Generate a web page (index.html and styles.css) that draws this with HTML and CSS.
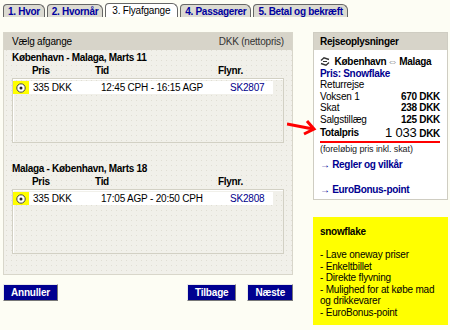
FILE: index.html
```html
<!DOCTYPE html>
<html lang="da">
<head>
    <meta charset="UTF-8">
    <title>Flyafgange</title>
    <link rel="stylesheet" href="styles.css">
</head>
<body>
    <div class="page">
        <div class="tabs">
            <span class="tab">1. Hvor</span>
            <span class="tab">2. Hvornår</span>
            <span class="tab active">3. Flyafgange</span>
            <span class="tab">4. Passagerer</span>
            <span class="tab">5. Betal og bekræft</span>
        </div>

        <div class="main">
            <div class="left">
                <div class="panel">
                    <div class="panel-head">
                        <span>Vælg afgange</span>
                        <span class="light">DKK (nettopris)</span>
                    </div>
                    <div class="panel-body">
                        <div class="leg">
                            <div class="leg-title">København - Malaga, Marts 11</div>
                            <div class="cols">
                                <span class="c-price">Pris</span>
                                <span class="c-time">Tid</span>
                                <span class="c-flight">Flynr.</span>
                            </div>
                            <div class="flights">
                                <div class="flight">
                                    <span class="radio"><svg width="10" height="10" viewBox="0 0 10 10"><circle cx="5" cy="5" r="4.2" fill="#fff" stroke="#444" stroke-width="1"/><circle cx="5" cy="5" r="1.5" fill="#222"/></svg></span>
                                    <span class="c-price">335 DKK</span>
                                    <span class="c-time">12:45 CPH - 16:15 AGP</span>
                                    <span class="c-flight link">SK2807</span>
                                </div>
                            </div>
                        </div>
                        <div class="leg">
                            <div class="leg-title">Malaga - København, Marts 18</div>
                            <div class="cols">
                                <span class="c-price">Pris</span>
                                <span class="c-time">Tid</span>
                                <span class="c-flight">Flynr.</span>
                            </div>
                            <div class="flights">
                                <div class="flight">
                                    <span class="radio"><svg width="10" height="10" viewBox="0 0 10 10"><circle cx="5" cy="5" r="4.2" fill="#fff" stroke="#444" stroke-width="1"/><circle cx="5" cy="5" r="1.5" fill="#222"/></svg></span>
                                    <span class="c-price">335 DKK</span>
                                    <span class="c-time">17:05 AGP - 20:50 CPH</span>
                                    <span class="c-flight link">SK2808</span>
                                </div>
                            </div>
                        </div>
                    </div>
                </div>
                <div class="buttons">
                    <button class="btn">Annuller</button>
                    <span class="spacer"></span>
                    <button class="btn">Tilbage</button>
                    <button class="btn">Næste</button>
                </div>
            </div>

            <div class="right">
                <div class="info">
                    <div class="panel-head">Rejseoplysninger</div>
                    <div class="info-body">
                        <div class="route">
                            <svg width="10" height="9" viewBox="0 0 10 9"><path d="M1 3.5 L4 0.8 L9 2.5 M9 5.5 L6 8.2 L1 6.5" fill="none" stroke="#333" stroke-width="1.4"/><path d="M3 4.5 H7" stroke="#333" stroke-width="1"/></svg>
                            <b>København</b><span class="swap">⇔</span><b>Malaga</b>
                        </div>
                        <div class="blue-b">Pris: Snowflake</div>
                        <div>Returrejse</div>
                        <div class="line"><span>Voksen 1</span><b>670 DKK</b></div>
                        <div class="line"><span>Skat</span><b>238 DKK</b></div>
                        <div class="line"><span>Salgstillæg</span><b>125 DKK</b></div>
                        <div class="line total"><b>Totalpris</b><span><span class="big">1 033</span> <b>DKK</b></span></div>
                        <div class="note">(foreløbig pris inkl. skat)</div>
                        <div class="blue-b more">→ Regler og vilkår</div>
                        <div class="blue-b bonus">→ EuroBonus-point</div>
                    </div>
                </div>
                <div class="promo">
                    <b>snowflake</b><br><br>
                    - Lave oneway priser<br>
                    - Enkeltbillet<br>
                    - Direkte flyvning<br>
                    - Mulighed for at købe mad og drikkevarer<br>
                    - EuroBonus-point
                </div>
            </div>
        </div>

        <svg class="arrow" width="30" height="18" viewBox="0 0 30 18"><path d="M0 5 L26 10 M20 2 L27 10 L17 15" fill="none" stroke="#f00" stroke-width="3"/></svg>
    </div>
</body>
</html>
```

FILE: styles.css
```css
* {
    margin: 0;
    padding: 0;
    box-sizing: border-box;
}

body {
    font-family: 'Liberation Sans', Arial, sans-serif;
    font-size: 10px;
    letter-spacing: -0.2px;
    color: #000;
    background: #fdfdf4;
}

b {
    letter-spacing: -0.3px;
}

.page {
    position: relative;
    width: 450px;
    height: 330px;
    padding: 3px 2px 0 3px;
}

/* Tabs */
.tabs {
    display: flex;
    align-items: flex-end;
    gap: 2px;
    height: 14px;
}

.tab {
    height: 13px;
    padding: 0 4px 0 4px;
    line-height: 13px;
    font-weight: bold;
    letter-spacing: -0.3px;
    color: #0000a0;
    background: #dcdbd2;
    border: 1px solid #666;
    border-bottom: none;
    border-radius: 4px 6px 0 0;
}

.tab.active {
    height: 14px;
    color: #000;
    font-weight: normal;
    letter-spacing: -0.2px;
    background: #fff;
    padding: 0 7px 0 6px;
}

.main {
    display: flex;
    gap: 20px;
    margin-top: 15px;
}

.left {
    width: 290px;
}

.panel {
    border: 1px solid #d8d6ca;
    background-color: #f1f0ea;
    background-image: radial-gradient(#e0ded4 0.6px, transparent 0.8px);
    background-size: 5px 5px;
    height: 243px;
}

.panel-head {
    display: flex;
    justify-content: space-between;
    height: 17px;
    line-height: 17px;
    padding: 0 8px;
    background: #d7d4c9;
    color: #000;
}

.light {
    color: #333;
}

.panel-body {
    padding: 1px 0 0 8px;
}

.leg + .leg {
    margin-top: 19px;
}

.leg-title {
    font-weight: bold;
    letter-spacing: -0.3px;
    line-height: 13px;
}

.cols, .flight {
    display: flex;
}

.cols {
    font-weight: bold;
    letter-spacing: -0.3px;
    line-height: 14px;
    padding-left: 20px;
}

.c-price {
    width: 63px;
}

.c-time {
    width: 123px;
}

.flights {
    width: 272px;
    height: 65px;
    border: 1px solid #d2d0c4;
    box-shadow: inset 1px 1px 0 #fff;
    padding: 2px 10px 0 0;
}

.flight {
    height: 13px;
    line-height: 13px;
    background: #fff;
}

.radio {
    width: 16px;
    height: 13px;
    margin-right: 4px;
    background: #ffff00;
    display: flex;
    align-items: center;
    justify-content: center;
}

.flight .c-price {
    width: 68px;
}

.flight .c-time {
    width: 129px;
}

.link {
    color: #00008b;
}

/* Buttons */
.buttons {
    display: flex;
    gap: 11px;
    margin-top: 9px;
}

.spacer {
    flex: 1;
}

.btn {
    font-family: 'Liberation Sans', Arial, sans-serif;
    font-size: 10px;
    font-weight: bold;
    letter-spacing: -0.2px;
    color: #fff;
    background: #000090;
    height: 17px;
    padding: 0 7px;
    border: 1px solid;
    border-color: #e8e8e8 #777 #777 #e8e8e8;
}

/* Right column */
.right {
    width: 135px;
}

.info {
    border: 1px solid #cfcdc2;
    background: #fff;
    height: 168px;
}

.info .panel-head {
    padding: 0 6px;
    font-weight: bold;
    letter-spacing: -0.3px;
}

.info-body {
    padding: 6px 7px 0 6px;
    line-height: 11.5px;
}

.route svg {
    vertical-align: -1px;
    margin-right: 2px;
}

.swap {
    font-size: 11px;
    color: #666;
    margin: 0 1px;
}

.blue-b {
    font-weight: bold;
    letter-spacing: -0.3px;
    color: #000090;
}

.line {
    display: flex;
    justify-content: space-between;
}

.total {
    border-bottom: 2px solid #f00;
    line-height: 13px;
    margin-top: 1px;
    padding-bottom: 1px;
}

.big {
    font-size: 13px;
    letter-spacing: -0.2px;
}

.note {
    font-size: 9px;
    letter-spacing: -0.1px;
    color: #222;
    line-height: 12px;
}

.more {
    margin-top: 4px;
}

.bonus {
    margin-top: 13px;
}

.promo {
    margin-top: 17px;
    background: #ffff00;
    padding: 9px 6px 6px 7px;
    line-height: 11.5px;
    height: 108px;
}

.arrow {
    position: absolute;
    left: 287px;
    top: 119px;
}
```
